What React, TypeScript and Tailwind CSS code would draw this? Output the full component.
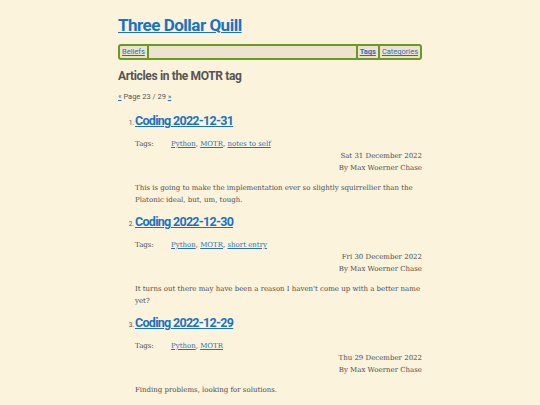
import React from 'react';

const posts = [
  {
    n: 1,
    title: 'Coding 2022-12-31',
    tags: ['Python', 'MOTR', 'notes to self'],
    date: 'Sat 31 December 2022',
    summary: 'This is going to make the implementation ever so slightly squirrellier than the Platonic ideal, but, um, tough.',
  },
  {
    n: 2,
    title: 'Coding 2022-12-30',
    tags: ['Python', 'MOTR', 'short entry'],
    date: 'Fri 30 December 2022',
    summary: "It turns out there may have been a reason I haven't come up with a better name yet?",
  },
  {
    n: 3,
    title: 'Coding 2022-12-29',
    tags: ['Python', 'MOTR'],
    date: 'Thu 29 December 2022',
    summary: 'Finding problems, looking for solutions.',
  },
];

const sans = "font-['Roboto',sans-serif]";
const serif = "font-['DejaVu_Serif',serif]";

export default function App() {
  return (
    <div className="min-h-screen bg-[#fcf3dc] text-[#555]">
      <div className="mx-auto w-[304px] pt-[14px]">
        <h1 className={`${sans} text-[17px] font-bold leading-[22px] tracking-[-0.5px]`}>
          <a href="#" className="text-[#1a72c4] underline">Three Dollar Quill</a>
        </h1>

        <nav className={`${sans} mt-[8px] flex h-[16px] items-center rounded-[3px] border-2 border-[#6a9a22] bg-[#ece4cf] text-[7.5px] leading-none`}>
          <a href="#" className="px-[2px] text-[#2a6fb5] underline">Beliefs</a>
          <span className="h-full w-[2px] bg-[#6a9a22]" />
          <span className="flex-1" />
          <span className="h-full w-[2px] bg-[#6a9a22]" />
          <a href="#" className="px-[2px] font-bold text-[#2a6fb5] underline">Tags</a>
          <span className="h-full w-[2px] bg-[#6a9a22]" />
          <a href="#" className="px-[2px] text-[#2a6fb5] underline">Categories</a>
        </nav>

        <h2 className={`${sans} mt-[8px] text-[12px] font-bold leading-[16px] tracking-[-0.35px] text-[#555]`}>
          Articles in the MOTR tag
        </h2>

        <p className={`${sans} mt-[8px] text-[7.5px] leading-[10px]`}>
          <a href="#" className="text-[#2a6fb5] underline">«</a> Page 23 / 29{' '}
          <a href="#" className="text-[#2a6fb5] underline">»</a>
        </p>

        <ol className="mt-[11px]">
          {posts.map((p) => (
            <li key={p.n} className="mb-[8px] flex">
              <span className={`${sans} w-[17px] pt-[5px] pr-[1px] text-right text-[6.5px] leading-[10px]`}>{p.n}.</span>
              <div className="flex-1">
                <h3 className={`${sans} text-[12.5px] font-bold leading-[16px] tracking-[-0.7px]`}>
                  <a href="#" className="text-[#1a72c4] underline">{p.title}</a>
                </h3>
                <div className={`${serif} mt-[9px] flex text-[7px] leading-[12px] text-[#4d4d4d]`}>
                  <span className="w-[36px]">Tags:</span>
                  <span>
                    {p.tags.map((t, i) => (
                      <React.Fragment key={t}>
                        <a href="#" className="text-[#2a6fb5] underline">{t}</a>
                        {i < p.tags.length - 1 ? ', ' : ''}
                      </React.Fragment>
                    ))}
                  </span>
                </div>
                <div className={`${serif} text-right text-[7px] leading-[12px] text-[#4d4d4d]`}>
                  <div>{p.date}</div>
                  <div>By Max Woerner Chase</div>
                </div>
                <p className={`${serif} mt-[8px] text-[7px] leading-[12px] text-[#4d4d4d]`}>{p.summary}</p>
              </div>
            </li>
          ))}
        </ol>
      </div>
    </div>
  );
}
